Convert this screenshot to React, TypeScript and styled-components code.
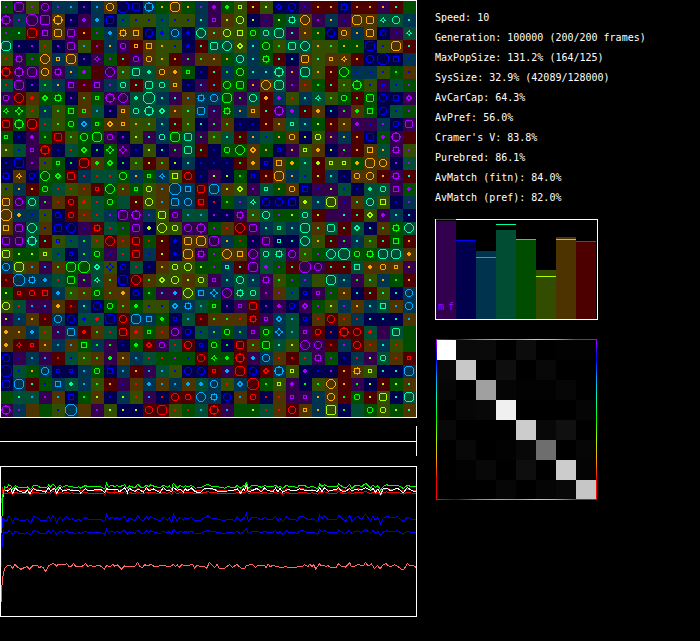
import React from "react";
import styled, { createGlobalStyle } from "styled-components";

const GlobalStyle = createGlobalStyle`
  body {
    margin: 0;
    background: #000;
    color: #fff;
    font-family: "DejaVu Sans Mono", "Liberation Mono", monospace;
  }
`;

const Page = styled.main`
  display: grid;
  grid-template-columns: minmax(0, 417fr) minmax(0, 283fr);
  min-height: 100vh;
  align-items: start;
`;

const WorldColumn = styled.section`
  display: flex;
  flex-direction: column;
  gap: 8px;
`;

const SideColumn = styled.aside`
  display: flex;
  flex-direction: column;
  align-items: flex-start;
  padding: 8px 0 0 18px;
`;

const Drawing = styled.svg`
  display: block;
  width: 100%;
  height: auto;
  shape-rendering: crispEdges;
`;

const StatList = styled.ul`
  list-style: none;
  margin: 0;
  padding: 0;
`;

const Stat = styled.li`
  font-size: 10px;
  line-height: 20px;
  white-space: nowrap;
`;

const SidePanel = styled.figure<{ $gap: number }>`
  width: 61.51%;
  margin: ${(p) => p.$gap}px 0 0;
`;

const BarLabel = styled.text`
  font-size: 10px;
  fill: #aa00ff;
`;

const BRIGHT: Record<string, string> = {
  p: "#aa00ff", b: "#0000ff", c: "#00aaff", t: "#00ffaa",
  g: "#00ff00", y: "#aaff00", o: "#ffaa00", r: "#ff0000",
};
const DARK: Record<string, string> = {
  p: "#33004d", b: "#00004d", c: "#00334d", t: "#004d33",
  g: "#004d00", y: "#334d00", o: "#4d3300", r: "#4d0000",
};
const HUES = ["p", "b", "c", "t", "g", "y", "o", "r"];

// One token per cell: background hue, mark hue, mark shape.
const CELLS = [
  "gp. ppQ yp. ppO cp. cc. bp. cc. ooO bbX bbZ ccK go. ooQ go. cp. pp+ gg+ yys ry. yy. bbd bbO pb. ro. ro. bbk ro. ro. po. rt. g--",
  "ppK cp. ppX ppH ooK bp. pp+ cc+ bbZ tb. yb. yb. tb. yb. yb. ct. pps oy. yyO by. pb. gy. ttk ooD pp. co. pb. ooQ ooZ ttm ttO ct.",
  "gp. gt. rrQ ppS ooZ ppZ ro. gp. cc+ ook ooS bbO tb+ ccO bb+ ttD ot. yyO yyS gga tta ttQ pt. oo. go. bbO ooa co. ooZ bba pb. ttm",
  "ttQ bp. bp. yr. bp. ppZ yc. rp. co. ppa ros ooS yo. yb. bb+ rt. ttZ ttD yyd ct. ggO yg. ttZ ttD yo. yg. go. go. bbQ yb. ooQ rt.",
  "yr. ppk gp. ooD cos ooQ bp. ppm gp. rt. ppa ooa yo. ro. pg. og. oo. go. ttO ct. ggk rt. bt. ooZ yt. oos oom ro. bbO bbX bbS cb.",
  "rrK ppK ppQ ooO ppk co. gp+ r-- ppD yt. ttZ tt+ ooa oo+ ggs bb. rt. cg. ggO ct. ct. ttK po. ttQ yo. ro. ggD cb. cb. yb. gg. ob.",
  "tr. ppQ bp. tg. co. ppS rp. ppS cp. tta rt. ttZ tta oos bb. pc. rc. ggO ggZ po. ooD ttQ pp. or. gg. rt. yg. ggK yb. pb+ tb. gp.",
  "ppa rrD or+ ggd ggk bp. og. ggs ppK ppD tt+ ttX ct. pt. oc. cck ccO ggQ pg. ttO ro+ cp+ yr. ct. ttm yg. gga rg. ggZ bbO bbS ppd",
  "ggm ggj yr. cg. yg. ggS ogs tc. bp. oos tta ttK ttd oo. yt. ccZ pc. ggk co. oos rt. ppK cp+ rt. oo+ bt. pg. og+ ggS bbO tb. gp.",
  "rrZ ggK rrQ tr. yg. gga ccd ggs ood oos yo. yt. ct. rt. yg. bt. pg. og. bb. bb. ro. oo. tts ct. gy. ro. oo. pp+ pb. cp. bba ppZ",
  "ggs bb. pp+ gg. rrZ yg. ggO ggQ ppa bp. yy. pt. cta ggQ ttZ pg. yg. tt. rg. co. tb. go. ooa by. yya po. co. ro. bbZ gp+ ppK r--",
  "yy. tb. pps rrK bb. tr. ggd bg. ggj ppj bb. yy. bt. pg. ttZ rt. bb. gga ggD ood go. bbs po. yys oo+ by. pg. ro. ooS to. ppk yp.",
  "bb. bbQ pp. yb. ggs bg. rrQ og+ ggd bg. yg. ry. og. by. ct. bb. bb. bb. rg. oo+ bbs ooS go+ tt. ry+ yys yys go+ ooQ ooO bp. tp.",
  "bbk oom bba ggD ggd rrZ cr. tr. tr. ggO co. ggs ccm yyS rrO bb. py. by. gg. bbs ro. ooQ co. tb. ry. ct. bb. ooa ooO ro. ppk rt.",
  "yb. co. ro. gga tr. yr. or. rrs ggD og. ggs yya oc. ccX ccS rrZ ccQ oy. yyd pp. tts go. ooa bbS pb. py. tb. bb. tt+ tta ppS gp+",
  "ooZ ppO ttO pg. or. rra yr+ tr. gga t-- ry. yyO oc. ccZ ccO rrS br. gg. cp. ttm bbO bbO bbZ yy+ ct. yyQ pb. ot. ttO yyS bb. cp.",
  "ooX co+ cb. yb. bba rra or. tr. cp. ppQ ppK cp. yyZ ppa tc. tc. bp. bp. ppk yt. ttO gp. gy. tta ry. p-- pt. rt. yyd pp+ ct. bt.",
  "ooS ppZ ttD ob. bbZ bbD pb. rrk tr. gp. ppZ by+ yyD yya ppO ppK gp. or. rrD ppZ ct. tts ct. ttQ ot. ttZ rt. ttd bt. og. ggk ttD",
  "ppZ ppZ ttK rt. ybs tb. cg. yr. rrD or. rrZ gr. ry. bb+ ooZ ooQ ppQ co. gr. bp. ppZ bts bt. ttD yo. rt. pg. ct. yg. rt. ggS ro.",
  "yyZ gy. gy. yys tb. bbs cg. gga pb. tr. rrZ cb. ry. bb+ ooQ ppk gp. ooD ooS ppD tta ttk ppO yg. gp. ttD ttX gga ggk ttQ ttQ oo+",
  "ccO yyQ oc. pc. og. ggQ ggX ttd ybj bba tr. bb. oo. yya yyO gy. gp. cts rt. ppQ tp+ gp. rt. ppX ppO rt. rt. ttS oo+ ooa oos po.",
  "rr. ccX cck cc+ tr. ggZ pg. ttm og. bbQ rrD og. yyd yyO oy. yya pps ct. ttO ct. ppk yg. gp. cp. y-- ttQ ct. pg. yt. co. gg. ro.",
  "gy. rrs rra rrS cc+ yg. og. gga og. oo+ bba gg. pc. pc+ yyD ccS ccj ppD ttk tta pp. op. tb. bbs pps gp. oo. bt. rt. yt. bt. ccO",
  "yyO tr. pc. pc. oo+ rr. ct. bbO gga og. gg+ yb. yb. ccd cck tc. ggs bp. pps rrZ bp. pp+ bba ppd gp. yy. cp. oo. ct. ttS oc. ccO",
  "py. cc. oo. rr. ccO bbO tb+ tr+ bbQ rrO ccQ ccS gg+ bbs tc. rr. og. og. or. rrk pps ccd tc. bbs or. rrO or. cr. bt. bt. bt. oc.",
  "oo+ oo. cc+ yr. pc. ccZ rr+ og. tr. rrZ or+ ggs or. ppO bba tb. cg. gga cg. pps gga ccj tc. pps rra br. rrK rrO tr+ p-- ttZ g--",
  "oo+ rrm rrs oo. cc. oc. ggS cg. pg. bb. gg+ rrd ppa tr. rrO bbs gga bg. rrZ og. ggZ tt. yy. ppD ppO rr. cp. rrO or. ct. yr. g--",
  "bbO pb. cc. pc. rr. tb. yg. og. pg+ oo. cc. tr. gr. gp. gb. rrO ggm gg+ rrK pc+ ccO or. rr. tr. ppk gp. bb. cr. py. tta or. rrs",
  "bbX tb. go. ccO bbs bbs cc. gga bbS cc. ro. pc. tc. yb. bbO bbO rrs pc+ rrQ bbO rrd ccK yys bp+ bb. bp. ro. ook yys bt. bt. ccQ",
  "bbZ ccQ rt. gb. ccS tt+ cc. yg. ro. pb. or. cc+ oc. cc. oc+ tc+ ccO yr. ccd rrX gg. yys pp+ bg. yg. ooD ro. pg. by. ry. gy. ot.",
  "g-- tt. tc. pp. oc. bbS gg. oy. bb. cy. yr. pc. br. rrO rra ccD cck bbO oc. rra br. or. pps pps co. ooO rg. gga ry. yyZ bt. ttQ",
  "ppK cp. o-- g-- yb. ccX o-- pp. yy. by. by. rrO rrQ yr. gr. tc. rrK pc. g-- gy. tr. or. rrO oos co. yyH bg. t-- gga yya gy. ot.",
].map((row) => row.split(" "));

const octagon = (r: number, k: number) =>
  `M${-k} ${-r}H${k}L${r} ${-k}V${k}L${k} ${r}H${-k}L${-r} ${k}V${-k}Z`;
const square = (r: number) => `M${-r} ${-r}H${r}V${r}H${-r}Z`;

const OUTLINES: Record<string, string> = {
  s: square(1.5),
  S: square(2.5),
  Z: octagon(3.5, 2.5),
  H: octagon(4.5, 3.5),
  a: octagon(2.5, 1.5),
  O: octagon(3.5, 1.5),
  Q: octagon(4.5, 2.5),
  X: octagon(5.5, 2.5),
  d: "M0 -2.5L2.5 0L0 2.5L-2.5 0Z",
  D: octagon(4.5, 1.5),
  j: "M0 -3.5L1.5 -1.5L3.5 0L1.5 1.5L0 3.5L-1.5 1.5L-3.5 0L-1.5 -1.5Z",
  k: `${square(2.5)}M0 -4V-3M0 3V4M-4 0H-3M3 0H4`,
  K: `${octagon(3.5, 2.5)}M-1 -4.5H1M-1 4.5H1M-4.5 -1V1M4.5 -1V1`,
  m: "M-.5 -1.5H.5L1.5 -.5V.5L.5 1.5H-.5L-1.5 .5V-.5Z M0 -3V-2M0 2V3M-3 0H-2M2 0H3",
};
const SOLIDS: Record<string, string> = {
  ".": "M-1 -1H1V1H-1Z",
  "+": "M-1 -2H1V-1H2V1H1V2H-1V1H-2V-1H-1Z",
};

function Population() {
  return (
    <Drawing viewBox="0 0 417 418" role="img" aria-label="Population grid">
      {CELLS.map((row, j) =>
        row.map((cell, i) => {
          const [ground, ink, shape] = cell;
          const color = BRIGHT[ink];
          return (
            <g key={`${i}-${j}`} transform={`translate(${i * 13} ${j * 13 + 1})`}>
              <rect width="13" height="13" fill={DARK[ground]} />
              {SOLIDS[shape] && (
                <path transform="translate(6 6)" d={SOLIDS[shape]} fill={color} />
              )}
              {OUTLINES[shape] && (
                <path transform="translate(6 6)" d={OUTLINES[shape]} fill="none" stroke={color} />
              )}
            </g>
          );
        })
      )}
      <rect x=".5" y=".5" width="416" height="417" fill="none" stroke="#fff" />
    </Drawing>
  );
}

function Timeline() {
  return (
    <Drawing viewBox="0 0 417 32" role="img" aria-label="Timeline">
      <path d="M0 15.5H416M416.5 0V30" stroke="#fff" />
    </Drawing>
  );
}

type Point = [number, number];

const parse = (text: string): Point[] =>
  text.split(" ").map((pair) => pair.split(",").map(Number) as Point);

// Series samples, three units to one pixel of the plot.
const WAVE = parse(
  "14,300 22,300 26,290 32,292 38,307 46,292 56,300 74,302 82,298 90,310 96,302 100,290 112,292 120,300 138,302 146,290 151,300 158,287 164,292 170,307 180,290 188,300 199,290 208,298 216,296 226,302 236,298 242,303 256,292 264,297 300,297 314,306 320,283 325,297 338,291 344,298 352,292 358,298 374,289 382,305 388,294 405,302 413,287 422,300 430,302 440,290 446,298 452,290 460,294 480,303 490,291 502,300 508,293 515,307 520,282 532,303 540,291 550,300 556,293 562,297 574,292 586,303 600,302 612,294 624,287 634,295 646,295 654,298 674,303 684,297 704,301 712,291 722,304 730,293 734,295 739,280 745,303 754,294 770,292 784,300 794,292 802,297 818,298 827,290 834,302 840,294 848,305 860,290 868,298 880,297 892,301 898,291 911,290 924,300 938,296 953,306 959,286 966,296 974,288 984,298 1010,298 1016,286 1024,294 1036,304 1049,287 1056,305 1064,294 1074,290 1084,298 1097,283 1112,303 1119,289 1126,300 1134,293 1142,312 1150,295 1160,289 1174,294 1192,290 1210,305 1222,291 1234,297 1248,298"
);
const FITNESS = parse(
  "5,545 5,505 8,475 11,455 16,442 24,436 32,436 38,445 44,433 54,442 63,448 72,443 82,440 88,448 100,436 112,436 118,444 124,439 130,444 137,454 147,436 160,430 170,438 175,433 196,434 200,430 206,438 215,438 220,430 228,440 245,440 257,431 264,440 270,435 278,439 300,437 314,447 320,436 330,440 338,433 344,439 352,435 364,447 374,438 405,439 413,427 420,440 428,442 434,434 444,438 452,433 462,439 490,437 510,440 520,433 526,440 532,435 538,442 546,434 556,438 578,433 584,444 592,435 600,440 612,438 620,445 628,428 644,442 652,433 658,446 670,447 688,434 698,442 710,433 724,445 734,445 740,436 758,433 766,443 774,436 794,436 798,443 804,431 810,441 820,435 830,440 846,442 856,440 874,443 886,444 896,438 908,439 914,434 924,440 929,433 936,440 941,434 947,447 958,432 964,438 972,435 978,440 984,437 994,444 1008,443 1016,431 1022,438 1036,441 1049,428 1054,440 1062,440 1074,434 1090,437 1097,427 1104,438 1114,432 1124,446 1132,436 1140,447 1148,435 1158,431 1170,441 1184,434 1192,438 1204,447 1212,447 1222,431 1230,438 1238,436 1248,442"
);

const derive = (start: string, base: number, gain: number, jitter = 0): Point[] => [
  ...parse(start),
  ...WAVE.map(([x, y], n): Point => [
    x,
    base + (y - 297) * gain + ((n * 7) % 5 - 2) * jitter,
  ]),
];

const SERIES: { color: string; points: Point[] }[] = [
  { color: "#ff0000", points: derive("8,250 8,205 11,220", 219, 0.4) },
  { color: "#ff0000", points: derive("5,250 8,205 11,210", 210, 0.5) },
  { color: "#0000ff", points: derive("5,440 5,340 8,295", 297, 1) },
  { color: "#0000ff", points: derive("8,380 8,345 11,334", 337, 0.65) },
  { color: "#ff6666", points: FITNESS },
  { color: "#ffffff", points: derive("8,285 8,240 11,210", 211, 0.7, 2) },
  { color: "#00ff00", points: derive("5,340 5,290 8,285 8,225 11,220 13,200", 200, 0.7) },
];

function History() {
  return (
    <Drawing viewBox="0 138 1251 453" role="img" aria-label="History of measures">
      {SERIES.map(({ color, points }, n) => (
        <polyline
          key={n}
          points={points.map((p) => p.join(",")).join(" ")}
          fill="none"
          stroke={color}
          strokeWidth="3"
        />
      ))}
      <rect x="1.5" y="139.5" width="1248" height="450" fill="none" stroke="#fff" strokeWidth="3" />
    </Drawing>
  );
}

// Top of each filled bar and of its marker line, from the chart's top edge.
const BARS = [[2, 0], [21, 21], [32, 38], [11, 5], [20, 20], [51, 57], [18, 20], [22, 22]];

function HueBars() {
  return (
    <Drawing viewBox="0 0 163 101" role="img" aria-label="Males and females by hue">
      <rect x=".5" y=".5" width="162" height="100" fill="none" stroke="#fff" />
      {BARS.map(([top, line], i) => (
        <g key={i}>
          <rect x={1 + i * 20} y={top} width="20" height={100 - top} fill={DARK[HUES[i]]} />
          <rect x={1 + i * 20} y={line} width="20" height="1" fill={BRIGHT[HUES[i]]} />
        </g>
      ))}
      <BarLabel x="3" y="91">m</BarLabel>
      <BarLabel x="13" y="91">f</BarLabel>
    </Drawing>
  );
}

const MATCHES = [
  [255, 10, 10, 0, 12, 0, 2, 2],
  [8, 200, 0, 14, 0, 8, 0, 0],
  [6, 0, 160, 5, 2, 2, 6, 0],
  [0, 6, 8, 240, 0, 0, 0, 5],
  [8, 0, 0, 0, 204, 8, 16, 0],
  [0, 8, 0, 2, 8, 110, 0, 6],
  [0, 2, 8, 0, 14, 0, 204, 4],
  [0, 0, 0, 6, 0, 5, 8, 198],
];

function HueStops() {
  return (
    <>
      {HUES.map((hue, i) => (
        <stop key={hue} offset={i / 8} stopColor={BRIGHT[hue]} />
      ))}
    </>
  );
}

function MatchMatrix() {
  return (
    <Drawing viewBox="0 0 163 161" role="img" aria-label="Matches between hues">
      <defs>
        <linearGradient id="hues-across" gradientUnits="userSpaceOnUse" x1="1" y1="0" x2="161" y2="0">
          <HueStops />
        </linearGradient>
        <linearGradient id="hues-down" gradientUnits="userSpaceOnUse" x1="0" y1="0" x2="0" y2="160">
          <HueStops />
        </linearGradient>
      </defs>
      {MATCHES.map((row, j) =>
        row.map((v, i) => (
          <rect
            key={`${i}-${j}`}
            x={1 + i * 20}
            y={1 + j * 20}
            width="20"
            height="20"
            fill={`rgb(${v},${v},${v})`}
          />
        ))
      )}
      <rect x="1" width="1" height="161" fill="url(#hues-down)" />
      <rect x="161" width="1" height="161" fill="url(#hues-down)" />
      <rect x="1" width="161" height="1" fill="url(#hues-across)" />
      <rect x="1" y="160" width="161" height="1" fill="url(#hues-across)" />
    </Drawing>
  );
}

const STATS = [
  "Speed: 10",
  "Generation: 100000 (200/200 frames)",
  "MaxPopSize: 131.2% (164/125)",
  "SysSize: 32.9% (42089/128000)",
  "AvCarCap: 64.3%",
  "AvPref: 56.0%",
  "Cramer's V: 83.8%",
  "Purebred: 86.1%",
  "AvMatch (fitn): 84.0%",
  "AvMatch (pref): 82.0%",
];

export default function App() {
  return (
    <>
      <GlobalStyle />
      <Page>
        <WorldColumn>
          <Population />
          <Timeline />
          <History />
        </WorldColumn>
        <SideColumn>
          <StatList>
            {STATS.map((line) => (
              <Stat key={line}>{line}</Stat>
            ))}
          </StatList>
          <SidePanel $gap={11}>
            <HueBars />
          </SidePanel>
          <SidePanel $gap={19}>
            <MatchMatrix />
          </SidePanel>
        </SideColumn>
      </Page>
    </>
  );
}
